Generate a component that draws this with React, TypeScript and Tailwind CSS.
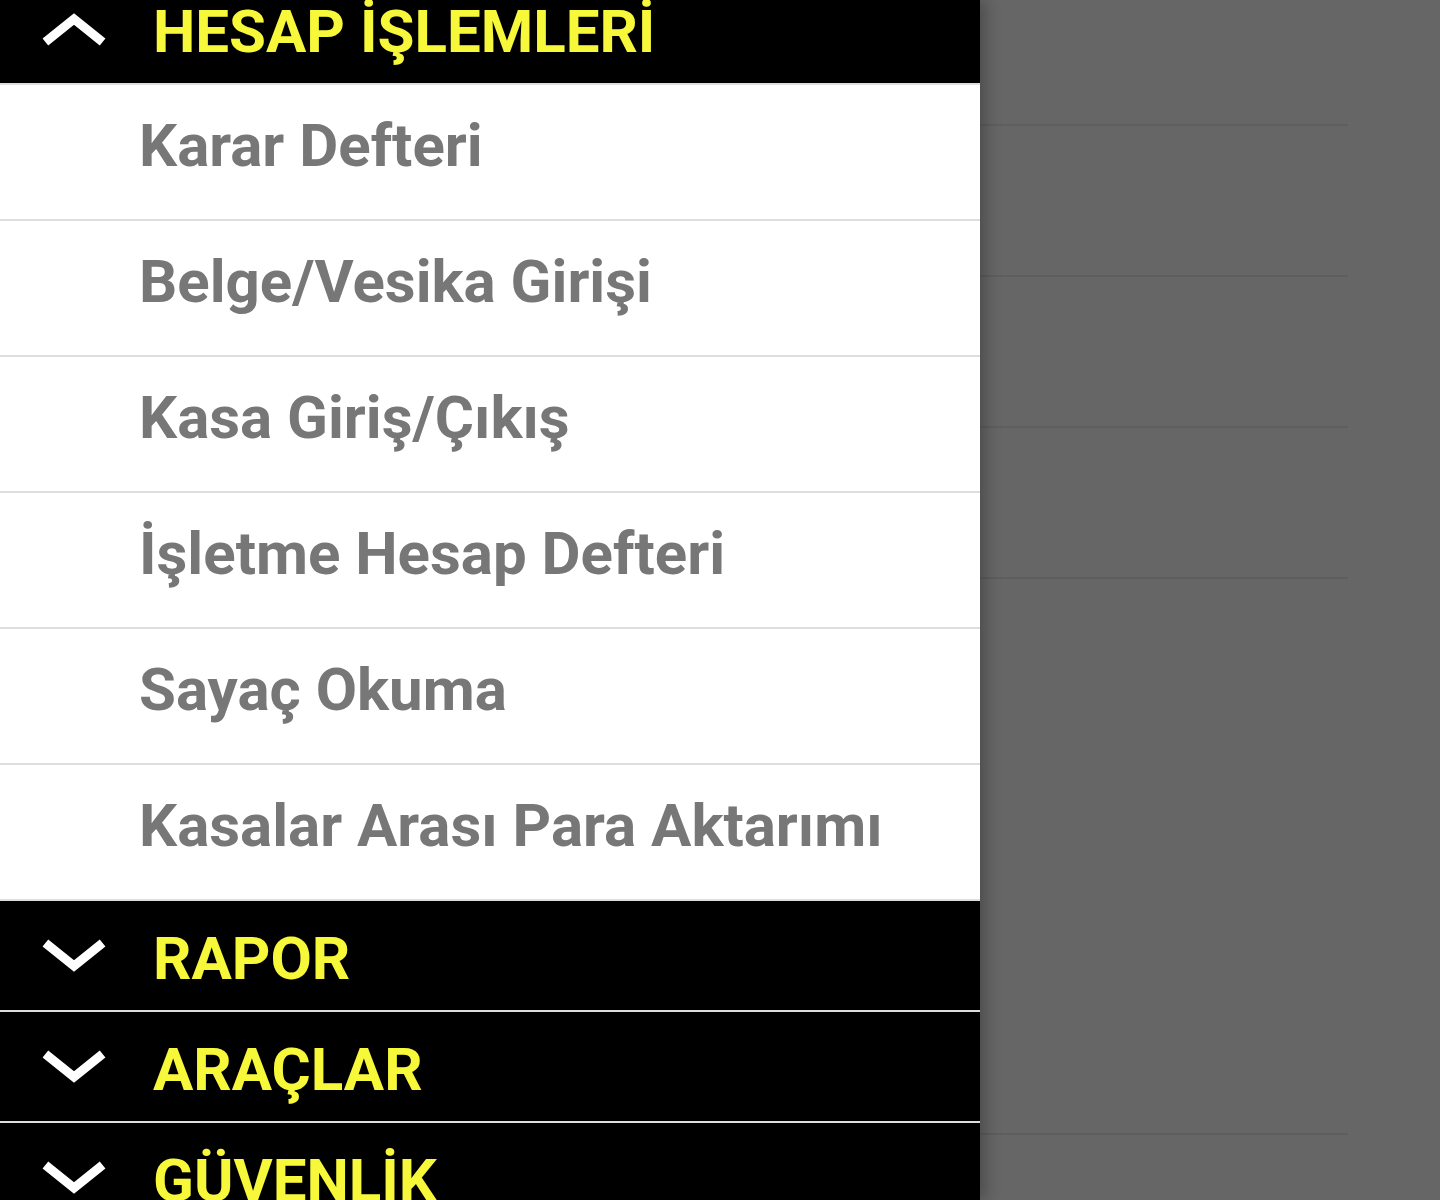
const items = [
  "Karar Defteri",
  "Belge/Vesika Girişi",
  "Kasa Giriş/Çıkış",
  "İşletme Hesap Defteri",
  "Sayaç Okuma",
  "Kasalar Arası Para Aktarımı",
];

const Chevron = ({ up }: { up?: boolean }) => (
  <svg width="64" height="34" viewBox="0 0 64 34" className="block">
    <polyline
      points={up ? "3.4,30.1 32,7 60.6,30.1" : "3.4,3.9 32,27 60.6,3.9"}
      fill="none"
      stroke="#ffffff"
      strokeWidth="9"
      strokeLinecap="butt"
      strokeLinejoin="miter"
    />
  </svg>
);

const SectionHeader = ({ title, open }: { title: string; open?: boolean }) => (
  <div className="flex h-[109px] shrink-0 items-center bg-black border-b-2 border-[#dedede] box-content">
    <div className="ml-[42px] w-[64px]">
      <Chevron up={open} />
    </div>
    <span className="ml-[47px] pt-[6px] text-[60px] leading-[70px] font-bold text-[#f8f83b]">
      {title}
    </span>
  </div>
);

export default function App() {
  return (
    <div
      className="flex h-[1200px] w-full overflow-hidden bg-[#666666]"
      style={{ fontFamily: "Roboto, 'Noto Sans', sans-serif" }}
    >
      {/* Drawer */}
      <div className="relative z-10 w-[980px] shrink-0 bg-white shadow-[6px_0_14px_rgba(0,0,0,0.25)]">
        <div className="-mt-[26px] flex flex-col">
          <SectionHeader title="HESAP İŞLEMLERİ" open />
          {items.map((item) => (
            <div
              key={item}
              className="flex h-[134px] shrink-0 items-center border-b-2 border-[#dedede] box-content"
            >
              <span className="ml-[139px] mb-[12px] text-[60px] leading-[70px] font-bold text-[#777777]">
                {item}
              </span>
            </div>
          ))}
          <SectionHeader title="RAPOR" />
          <SectionHeader title="ARAÇLAR" />
          <SectionHeader title="GÜVENLİK" />
        </div>
      </div>

      {/* Dimmed page behind */}
      <div className="flex-1">
        <div className="flex w-[368px] flex-col">
          <div className="h-[124px] border-b-2 border-[#5e5e5e] box-content" />
          <div className="h-[149px] border-b-2 border-[#5e5e5e] box-content" />
          <div className="h-[149px] border-b-2 border-[#5e5e5e] box-content" />
          <div className="h-[149px] border-b-2 border-[#5e5e5e] box-content" />
          <div className="h-[554px] border-b-2 border-[#5e5e5e] box-content" />
        </div>
      </div>
    </div>
  );
}
